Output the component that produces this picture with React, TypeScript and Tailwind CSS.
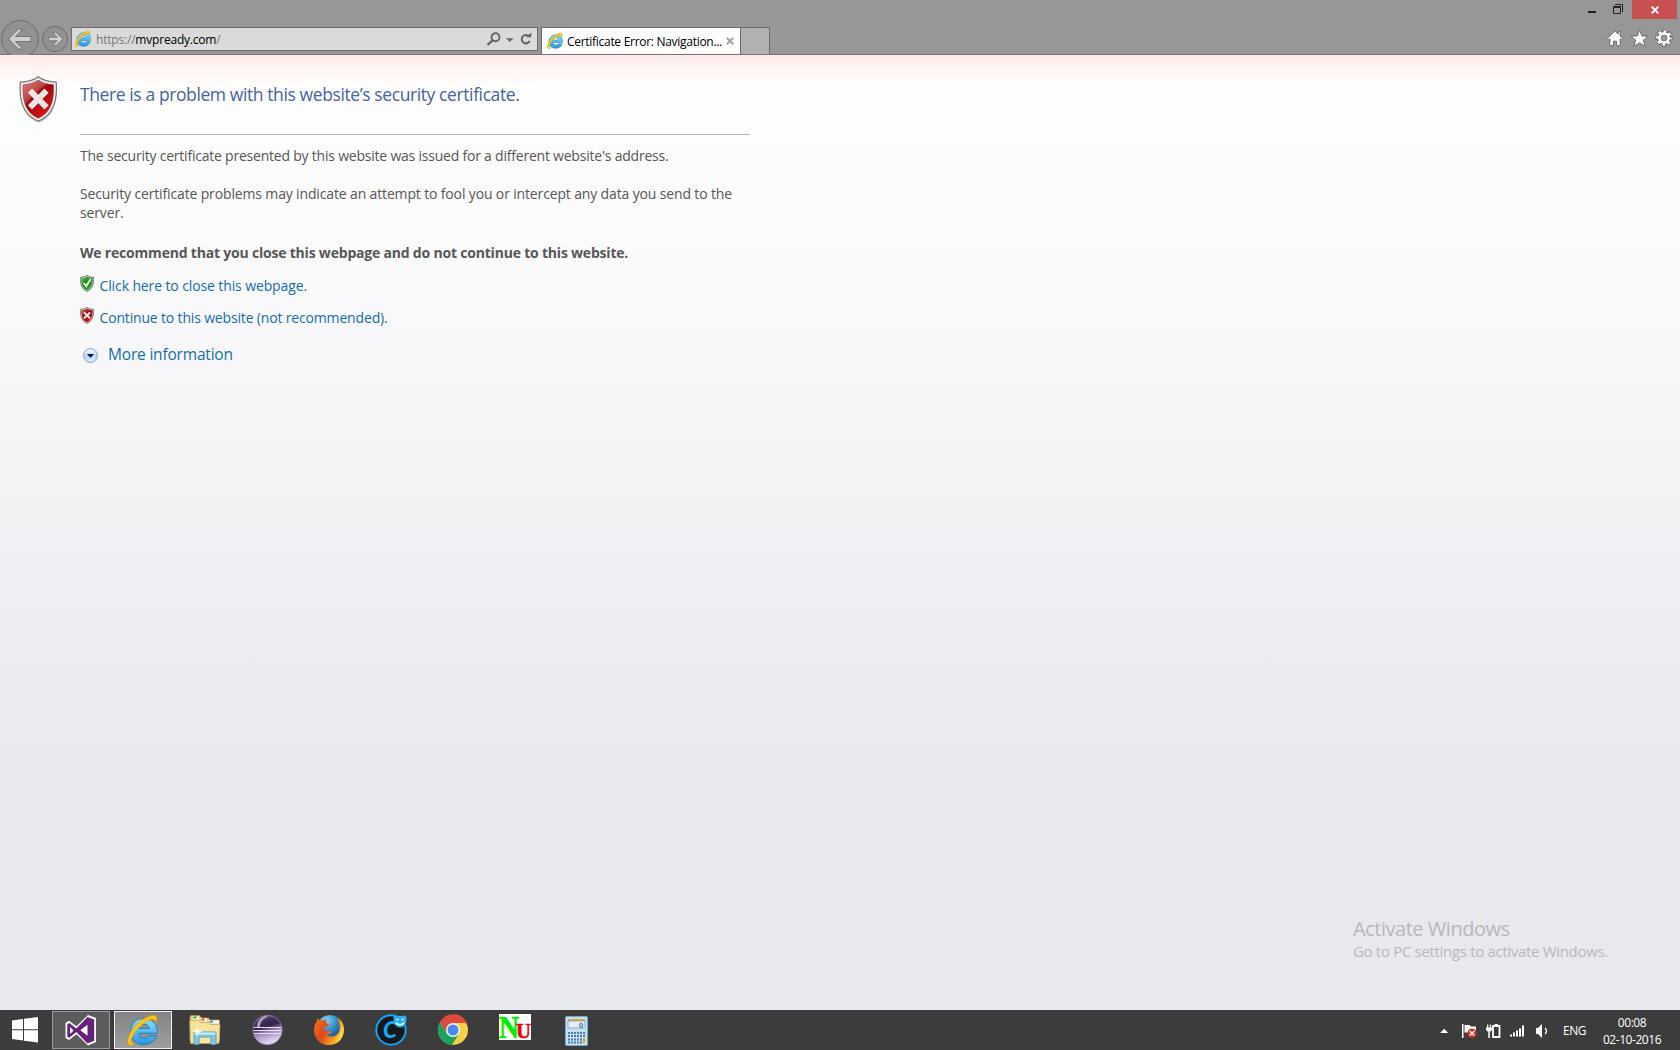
import React from "react";

function IELogo({ className, id }: { className: string; id: string }) {
  return (
    <svg className={className} viewBox="1 1 30.500 30.500">
      <defs>
        <linearGradient id={id} x1="0" y1="0" x2="0" y2="1">
          <stop offset="0" stopColor="#86e0fc" />
          <stop offset="0.5" stopColor="#52bdf0" />
          <stop offset="1" stopColor="#2a93d8" />
        </linearGradient>
      </defs>
      <path
        fillRule="evenodd"
        d="M30.800 19H12.400c.3 3 2.400 4.700 5.200 4.700 2.200 0 3.700-.8 4.700-2.300h7.700C28.300 27 23.500 30.300 17.500 30.300 9.800 30.300 4.500 25 4.500 17.300 4.500 9.600 10.200 4.300 17.700 4.300c8.200 0 13.100 5.700 13.100 13.700zM12.500 14.300h10.300c-.3-2.700-2.300-4.300-5-4.300-2.800 0-4.800 1.600-5.300 4.300z"
        fill={`url(#${id})`}
        stroke="#1c79b8"
        strokeWidth="0.9"
      />
      <path
        d="M8.500 29.600C2.300 33 .2 29.600 2.500 22.500 6 12.800 16 3.800 24 1.700c6.700-1.700 7.700 2.500 4.900 7.600.3-4-1.800-4.800-5.100-3.500C15.800 8.800 8.600 16.500 6 23c-1.500 3.900-.6 6 2.500 6.600z"
        fill="#fcc41d"
        stroke="#d99a00"
        strokeWidth="0.6"
      />
    </svg>
  );
}

function BackButton() {
  return (
    <svg className="block h-[55px] w-[40px]" viewBox="0 0 40 55">
      <circle cx="20" cy="39" r="18.500" fill="#929292" stroke="#6c6c6c" />
      <path d="M8.500 39 18.500 29h4.300l-7.500 7.500H31v5H15.300l7.500 7.500h-4.300z" fill="#d0d0d0" stroke="#6c6c6c" strokeWidth="0.9" />
    </svg>
  );
}

function ForwardButton() {
  return (
    <svg className="block h-[55px] w-[31px]" viewBox="0 0 31 55">
      <circle cx="15" cy="39" r="12.500" fill="#929292" stroke="#6c6c6c" />
      <path d="M22.800 39 16 32.300h-3.500l4.700 4.900H8.500v3.600h8.700l-4.700 4.900H16z" fill="#d0d0d0" stroke="#6c6c6c" strokeWidth="0.8" />
    </svg>
  );
}

function AddressBar() {
  return (
    <div className="mt-[27px] flex h-6 w-[467px] items-start border border-[#6b6b6b] bg-[#dadada]">
      <IELogo id="ie-address" className="mt-[3px] ml-[3px] h-4 w-4" />
      <div className="mt-px ml-[5px] text-[12px] leading-[22px] tracking-[-0.200px] text-[#777777]">
        https://<span className="text-black">mvpready.com</span>/
      </div>
      <svg className="ml-auto h-[22px] w-[52px]" viewBox="0 0 52 22">
        <g fill="none" stroke="#666666">
          <circle cx="10.500" cy="9.300" r="4" strokeWidth="1.900" />
          <path d="M7.500 12.300 2.500 17" strokeWidth="2.400" />
          <path d="M44 8.300A4.200 4.200 0 1 0 44.700 13" strokeWidth="2" />
        </g>
        <path d="M21 10.200h7.600l-3.800 3.900zM40.700 9.300h5.600V4.500z" fill="#666666" />
      </svg>
    </div>
  );
}

function Tabs() {
  return (
    <div className="mt-[27px] ml-[3px] flex h-[27px]">
      <div className="flex h-[27px] w-[200px] items-start border border-b-0 border-[#6b6b6b] bg-white">
        <IELogo id="ie-tab" className="mt-[5px] ml-[5px] h-4 w-4" />
        <span className="mt-px ml-1 w-[158px] whitespace-nowrap text-[12px] leading-[26px] tracking-[-0.290px] text-black">
          Certificate Error: Navigation...
        </span>
        <svg className="mt-[9px] ml-[1px] h-2 w-2" viewBox="0 0 8 8">
          <path d="M.7.700 7.300 7.300M7.300.7.700 7.300" stroke="#a5a5a5" strokeWidth="2" />
        </svg>
      </div>
      <div className="h-[27px] w-[29px] border border-b-0 border-l-0 border-[#6b6b6b] bg-[#b1b1b1]" />
    </div>
  );
}

function WindowControls() {
  return (
    <div className="ml-auto w-[100px]">
      <div className="flex h-[19px]">
        <svg className="h-[19px] w-[52px]" viewBox="0 0 52 19">
          <path d="M8 11h8v2H8z" fill="#222" />
          <path d="M33.500 7.500h7v6h-7zM33 6.500h8" fill="none" stroke="#222" />
          <path d="M35 4.500h7.500V12" fill="none" stroke="#222" />
        </svg>
        <div className="flex h-[19px] w-[45px] items-center justify-center bg-[#c75050]">
          <svg className="h-2 w-2" viewBox="0 0 8 8">
            <path d="M.7.700 7.300 7.300M7.300.7.700 7.300" stroke="white" strokeWidth="1.900" />
          </svg>
        </div>
      </div>
      <svg className="block h-[35px] w-[100px]" viewBox="0 19 100 35">
        <g fill="white" stroke="#6a6a6a" strokeWidth="1" strokeLinejoin="round">
          <path d="M35 30.800 38.200 34v-2.600h2v4.600l2.500 2.600-1.200 1.200-1.300-1.100v7H36.500v-4.500h-3v4.500h-3.700v-7l-1.300 1.100-1.200-1.200z" />
          <path d="m59.500 29.800 2.400 6.200 6.400.200-5 4 1.800 6.200-5.600-3.600-5.600 3.600 1.800-6.200-5-4 6.400-.2z" />
        </g>
        <g fill="none">
          <circle cx="84" cy="38" r="5" stroke="#6a6a6a" strokeWidth="4.400" />
          <circle cx="84" cy="38" r="6.700" stroke="#6a6a6a" strokeWidth="4" strokeDasharray="3.500 1.762" strokeDashoffset="1.750" />
          <circle cx="84" cy="38" r="4.600" stroke="white" strokeWidth="2.600" />
          <circle cx="84" cy="38" r="6.500" stroke="white" strokeWidth="2.600" strokeDasharray="2.500 2.605" strokeDashoffset="1.250" />
        </g>
      </svg>
    </div>
  );
}

function Shield({ className, kind }: { className: string; kind: "red" | "smallRed" | "green" }) {
  const big = kind === "red";
  const colors = kind === "green" ? ["#5fce4b", "#148a12", "#35b02b"] : ["#dd6662", "#a00808", "#dc1818"];
  return (
    <svg className={className} viewBox="0 0 38 46" preserveAspectRatio="none">
      <defs>
        <linearGradient id={`shield-${kind}`} x1="0" y1="0" x2="0.700" y2="1">
          <stop offset="0" stopColor={colors[0]} />
          <stop offset="0.500" stopColor={colors[1]} />
          <stop offset="1" stopColor={colors[2]} />
        </linearGradient>
      </defs>
      <path d="M19 1.500C14.500 4.800 8.500 6.300 1.500 6.500 0 23 4 39.500 19 45 34 39.500 38 23 36.500 6.500 29.500 6.300 23.500 4.800 19 1.500z" fill="#a0a0a0" opacity="0.500" transform="translate(.6 .8)" />
      <path d="M19 .800C14.500 4.300 8.500 5.800 1.300 6 0 23 4 38.500 19 44 34 38.500 38 23 36.700 6 29.500 5.800 23.500 4.300 19 .8z" fill={big ? "#f0f0f0" : "#d0d0d0"} stroke="#777777" strokeWidth={big ? 1.2 : 2.4} />
      <path d="M19 4C14.500 7 9.500 8.300 4 8.600 3.200 22.500 6 36 19 41.300 32 36 34.800 22.500 34 8.600 28.500 8.300 23.500 7 19 4z" fill={`url(#shield-${kind})`} stroke={big ? "#8d1c1c" : "none"} strokeWidth="0.500" />
      {big && <path d="M19 4C14.500 7 9.500 8.300 4 8.600c-.4 7 .2 13.500 2.300 19C12 20 20 12 28 7.500 24.500 6.700 21.500 5.600 19 4z" fill="white" opacity="0.180" />}
      {kind === "green" ? (
        <path d="m10 22 7 8L29 11" fill="none" stroke="white" strokeWidth="5" />
      ) : (
        <path d="m10.800 14.300 16.400 16.400M27.200 14.300 10.800 30.700" stroke={big ? "#e6e6e6" : "white"} strokeWidth={big ? 5.8 : 5} />
      )}
    </svg>
  );
}

function CertificatePage() {
  return (
    <main className="flex h-[955px] bg-[linear-gradient(to_bottom,#ffeaea_0px,#fff6f6_16px,#fffefe_33px,#fdfdfd_60px,#fbfbfc_170px,#f8f8fa_290px,#ebecf0_620px,#e8e9ee_760px,#e8e9ee_955px)]">
      <div className="w-20 pt-[21px] pl-[19px]">
        <Shield kind="red" className="h-[47px] w-[38.500px]" />
      </div>
      <div className="w-[670px] text-[14px] leading-[19px] text-[#575757]">
        <h1 className="mt-[26px] h-[54px] whitespace-nowrap border-b border-[#aeb5bf] text-[17.500px] leading-[26px] tracking-[-0.400px] text-[#4465a2]">
          There is a problem with this website’s security certificate.
        </h1>
        <p className="mt-[11px] whitespace-nowrap tracking-[-0.217px]">The security certificate presented by this website was issued for a different website's address.</p>
        <p className="mt-[19px] whitespace-nowrap tracking-[-0.146px]">
          Security certificate problems may indicate an attempt to fool you or intercept any data you send to the
          <br />
          server.
        </p>
        <p className="mt-[21px] whitespace-nowrap font-bold tracking-[-0.200px]">We recommend that you close this webpage and do not continue to this website.</p>
        <div className="mt-[13px] flex h-8 text-[#136fab]">
          <Shield kind="green" className="h-[17px] w-[14px]" />
          <a className="mt-px ml-[5.500px] whitespace-nowrap tracking-[-0.115px]">Click here to close this webpage.</a>
        </div>
        <div className="flex h-8 text-[#136fab]">
          <Shield kind="smallRed" className="h-[17px] w-[14px]" />
          <a className="mt-px ml-[5.500px] whitespace-nowrap tracking-[-0.165px]">Continue to this website (not recommended).</a>
        </div>
        <div className="mt-1 flex text-[15.500px] leading-5 text-[#136fab]">
          <svg className="mt-[5px] ml-[3px] h-[15px] w-[15px]" viewBox="0 0 15 15">
            <defs>
              <linearGradient id="expander" x1="0" y1="0" x2="0" y2="1">
                <stop offset="0" stopColor="#f7fbff" />
                <stop offset="0.600" stopColor="#bfdaf3" />
                <stop offset="1" stopColor="#d9f4fd" />
              </linearGradient>
            </defs>
            <circle cx="7.500" cy="7.500" r="6.900" fill="url(#expander)" stroke="#7e9dcc" />
            <path d="M3.800 6h7.400L7.500 9.800z" fill="#07104f" />
          </svg>
          <a className="mt-px ml-[10px] whitespace-nowrap tracking-[-0.190px]">More information</a>
        </div>
      </div>
      <div className="mt-auto mr-[71px] mb-[49px] ml-auto w-[256px] whitespace-nowrap text-[#b7b8bb]">
        <div className="text-[20px] leading-[26px] tracking-[-0.470px]">Activate Windows</div>
        <div className="-mt-px text-[15px] leading-5 tracking-[-0.320px]">Go to PC settings to activate Windows.</div>
      </div>
    </main>
  );
}

function VisualStudioIcon() {
  return (
    <svg className="h-8 w-8" viewBox="0 0 32 32">
      <path d="M23 1 31 4v24l-8 3.500L11.500 20.300 4 26l-3.500-2V9L4 6.800l7.500 5.500z" fill="white" />
      <path fillRule="evenodd" d="m22.500 3 6.700 2.500v21.200L22.500 29.500 11.300 18 4.300 23.800l-2-1.100V10.200l2-1.200 7 5.500zM22.500 10.800 15.300 16.200l7.200 5.600zM5 13v7l3.600-3.600z" fill="#68217a" />
    </svg>
  );
}

function ExplorerIcon() {
  return (
    <svg className="h-8 w-8" viewBox="0 0 32 32">
      <path d="M1 3q0-1.500 1.500-1.500h8L12.500 4h7l1.500 2h9.500v21H1z" fill="#eccf76" stroke="#b99745" strokeWidth="0.700" />
      <path d="M4 2.500h6v3H4zM12 4.500h6v3h-6zM21 6.500h9v3h-9z" fill="white" />
      <path d="M4.500 2.500h3v2h-3z" fill="#16a916" />
      <path d="M12.500 4.600h3v2h-3z" fill="#d94a27" />
      <path d="M21 6.600h3v2h-3z" fill="#1e98dc" />
      <path d="M.800 6.500h8.700L12 8.500h7.500l1.500 2H31l-1 19H1.500z" fill="#f6e39c" stroke="#c8a655" strokeWidth="0.700" />
      <path d="M5 30.500V18h22v12.500h-5V23H10v7.500z" fill="#85c7e3" stroke="#4fa2ca" />
      <path d="M5.500 18.500h21v2h-21z" fill="#d5effa" />
      <path d="m8.500 12 1 4 4 1.500-4 1.500-1 4-1-4-4-1.500 4-1.500z" fill="white" opacity="0.850" />
    </svg>
  );
}

function EclipseIcon() {
  return (
    <svg className="h-8 w-8" viewBox="0 0 32 32">
      <defs>
        <linearGradient id="eclipse" x1="0" y1="0" x2="0.300" y2="1">
          <stop offset="0" stopColor="#ab9fbd" />
          <stop offset="0.250" stopColor="#45305f" />
          <stop offset="0.480" stopColor="#35214c" />
          <stop offset="0.650" stopColor="#9c86bd" />
          <stop offset="1" stopColor="#e1d8ec" />
        </linearGradient>
      </defs>
      <circle cx="16.500" cy="16" r="14.700" fill="url(#eclipse)" stroke="#9384ab" strokeWidth="0.800" />
      <path d="M6 13C6 5 12 2 18 1.800 11 5 9 9 9 13z" fill="#d8cfe2" opacity="0.700" />
      <path d="M3 13.500h27M2.500 16.500h28M3 19.500h27" stroke="#e5dff0" strokeWidth="1.200" />
    </svg>
  );
}

function FirefoxIcon() {
  return (
    <svg className="h-8 w-8" viewBox="0 0 32 32">
      <defs>
        <radialGradient id="fox-globe" cx="0.350" cy="0.200" r="0.800">
          <stop offset="0" stopColor="#8bd3ef" />
          <stop offset="0.500" stopColor="#2e8ac4" />
          <stop offset="1" stopColor="#103c79" />
        </radialGradient>
        <linearGradient id="fox-body" x1="0" y1="0" x2="1" y2="0.600">
          <stop offset="0" stopColor="#ee7421" />
          <stop offset="0.500" stopColor="#dd4a1c" />
          <stop offset="0.850" stopColor="#f7a621" />
          <stop offset="1" stopColor="#ffe34e" />
        </linearGradient>
      </defs>
      <circle cx="17" cy="14.500" r="13.500" fill="url(#fox-globe)" />
      <path d="M26 4.500c4 3 5.500 8 5 12.500C30 26 23.500 31 16 31 7.500 31 1 25 1 16.500c0-4 1-7 3-9.500l-.200-3 3 2.200c1.600-.5 3-.4 4.400.3L13.500 4.700l-.300 4.300 2.600 1.700c0 1-.8 1.700-3.600 2.300l-1.500 2.700 1.500 1.300c2.200-.7 4-.3 6.500.7-1 2-3 3-5.500 2.600 4 4.500 12.300 2 13.300-4.600.700-4.700-.500-8-2.500-10.700z" fill="url(#fox-body)" />
      <path d="M27 6c5 8 3 16-4 20 6-6 6.500-13 4-20z" fill="#ffe25b" />
    </svg>
  );
}

function CIcon() {
  return (
    <svg className="h-8 w-8" viewBox="0 0 32 32">
      <circle cx="16" cy="16" r="14.700" fill="#161819" stroke="#11a3f5" strokeWidth="2" />
      <text x="8" y="24" fontFamily="Lato" fontSize="22" fontStyle="italic" fontWeight="900" fill="#16a8f8" textLength="14" lengthAdjust="spacingAndGlyphs">
        C
      </text>
      <path d="M18.500 4q0-2.500 2-2.500 4.500 1 8.500 0 2.500 0 2.500 2.500 0 9.500-6.500 9.500T18.500 4z" fill="#27aef8" />
      <path d="M21.500 5.500h2M26.700 5.500h2M20.800 8.500c2.300 3 6.300 3 8.400 0" fill="none" stroke="white" strokeWidth="1.400" />
    </svg>
  );
}

function ChromeIcon() {
  return (
    <svg className="h-8 w-8" viewBox="0 0 32 32">
      <circle cx="16" cy="16" r="15" fill="#fdd047" />
      <path d="M16 9H30A15 15 0 0 0 3 8.500L9.900 19.500z" fill="#dc4b3e" />
      <path d="M3 8.500A15 15 0 0 0 15 31l7.100-11.500-6.100 3.500-6.100-3.500z" fill="#1da15f" />
      <circle cx="16" cy="16" r="7" fill="#f5f5f5" />
      <circle cx="16" cy="16" r="5.500" fill="#4a8af4" />
    </svg>
  );
}

function NuIcon() {
  return (
    <svg className="mb-[7px] h-[26px] w-8 overflow-visible" viewBox="0 0 32 26">
      <path d="M0 0h32v26H0z" fill="white" />
      <text x="0" y="23.500" fontFamily="Liberation Serif" fontSize="32" fontWeight="700" fill="#00f000" stroke="#00f000" strokeWidth="0.700" textLength="20" lengthAdjust="spacingAndGlyphs">N</text>
      <text x="17" y="23.700" fontFamily="Liberation Serif" fontSize="20.500" fontWeight="700" fill="#f00000" stroke="#f00000" strokeWidth="0.500" textLength="15" lengthAdjust="spacingAndGlyphs">U</text>
    </svg>
  );
}

function CalculatorIcon() {
  return (
    <svg className="mt-px mr-px h-[30px] w-[23px]" viewBox="0 0 23 30">
      <rect x="0.500" y="0.500" width="22" height="29" rx="1" fill="#c3e0f2" stroke="#6ea9d0" />
      <path d="M3 3h17v2H3z" fill="#f5a339" />
      <path d="M3 5h17v7H3z" fill="#e1edf7" stroke="#6e98bd" strokeWidth="0.700" />
      <text x="14" y="11.500" fontFamily="Liberation Sans" fontSize="7.500" fontWeight="700" fill="#49698b">0</text>
      <g stroke="#4e7ca6" strokeWidth="2" strokeDasharray="2 1">
        <path d="M3 17h17M3 20h17M3 23.500h14M3 26.500h14" />
      </g>
      <path d="M18 22h2v5h-2z" fill="#f59a23" />
    </svg>
  );
}

function Tray() {
  return (
    <div className="ml-auto flex h-10 w-[245px] text-[12px] text-white">
      <svg className="h-10 w-[124px]" viewBox="1435 1010 124 40">
        <path d="m1440.200 1033 4-4.300 4 4.300z" fill="white" />
        <path d="M1462 1024h1.500v14H1462z" fill="white" />
        <path d="M1464.500 1025h5l1.500 1.500h5v7.500h-5l-1.500-1.500h-5z" fill="white" />
        <circle cx="1472" cy="1033.300" r="4.700" fill="#dc2b21" />
        <path d="m1469.800 1031 4.500 4.500m0-4.500-4.500 4.500" stroke="white" strokeWidth="1.500" />
        <path d="M1493 1026h6.500v11h-6.500z" fill="none" stroke="white" strokeWidth="1.800" />
        <path d="M1494.500 1024h3.500v2h-3.500zM1486 1027.500h6v2.500l-1.500 1.500h-3l-1.500-1.500zM1487 1024.500h1.300v3H1487zM1489.800 1024.500h1.300v3h-1.300zM1488.300 1031h1.500v7h-1.500z" fill="white" />
        <path d="M1510 1034.500h2v2h-2zM1513 1032.500h2v4h-2zM1516 1030.500h2v6h-2zM1519 1028.500h2v8h-2zM1522 1025.500h2v11h-2z" fill="white" />
        <path d="M1536 1028h2l4-4v14l-4-4h-2z" fill="white" />
        <path d="M1545 1028q3 3 0 6" fill="none" stroke="white" strokeWidth="1.300" />
      </svg>
      <span className="ml-[4px] w-[32px] leading-[41px] tracking-[-0.500px]">ENG</span>
      <div className="w-[74px] pt-[4px] text-center leading-[17px] tracking-[-0.450px]">
        <div>00:08</div>
        <div className="whitespace-nowrap">02-10-2016</div>
      </div>
    </div>
  );
}

function Taskbar() {
  const slot = "flex h-[38px] w-[58px] items-center justify-center";
  return (
    <footer className="flex h-10 items-start bg-[#3c3c3c] pt-px">
      <div className="-mt-px w-[52px]">
        <svg className="mt-[7px] ml-3 h-[26px] w-[26px]" viewBox="0 0 26 26">
          <path d="M0 3.500 11 2v10.300H0zM12 1.800 26 0v12.300H12zM0 13.300h11v10.200L0 22zM12 13.300h14V25.500l-14-1.800z" fill="white" />
        </svg>
      </div>
      <div className="flex gap-1">
        <div className={`${slot} border border-[#9b9b9b] bg-[#5c5c5c]`}><VisualStudioIcon /></div>
        <div className={`${slot} border border-[#f0f0f0] bg-linear-to-b from-[#848484] to-[#9d9d9d]`}><IELogo id="ie-task" className="mr-px h-[31px] w-[31px]" /></div>
        <div className={slot}><ExplorerIcon /></div>
        <div className={slot}><EclipseIcon /></div>
        <div className={slot}><FirefoxIcon /></div>
        <div className={slot}><CIcon /></div>
        <div className={slot}><ChromeIcon /></div>
        <div className={slot}><NuIcon /></div>
        <div className={slot}><CalculatorIcon /></div>
      </div>
      <div className="-mt-px ml-auto"><Tray /></div>
    </footer>
  );
}

export default function App() {
  return (
    <div className="h-[1050px] w-[1680px] overflow-hidden font-['Open_Sans','Noto_Sans',sans-serif]">
      <header className="flex h-[55px] items-start border-b border-[#757575] bg-[#979797]">
        <BackButton />
        <ForwardButton />
        <AddressBar />
        <Tabs />
        <WindowControls />
      </header>
      <CertificatePage />
      <Taskbar />
    </div>
  );
}
